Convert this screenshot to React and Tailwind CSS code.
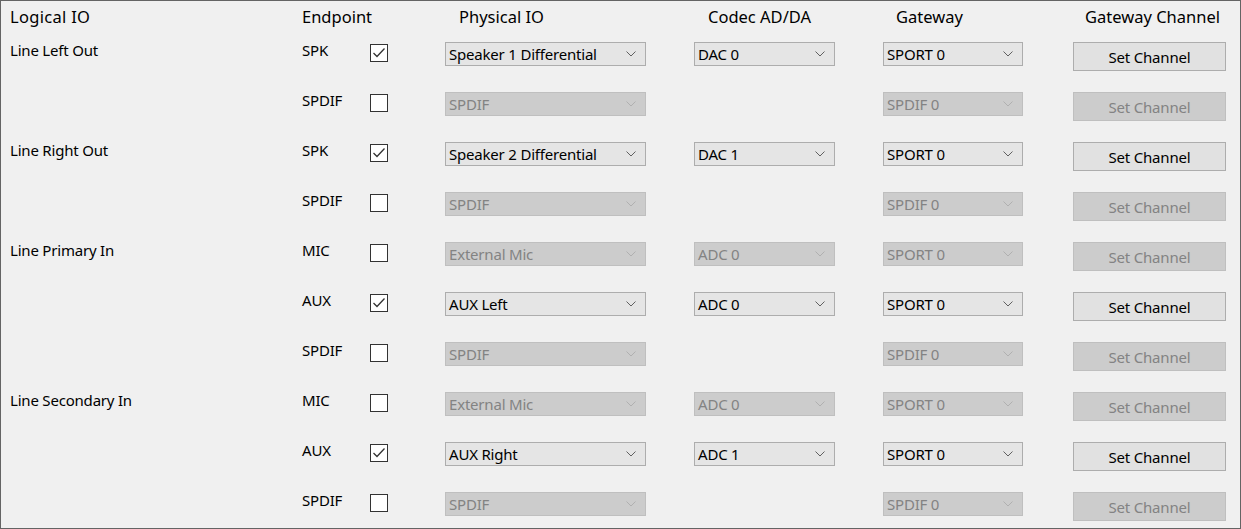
import React from 'react';

const rows = [
  { logical: 'Line Left Out', ep: 'SPK', checked: true, phys: 'Speaker 1 Differential', codec: 'DAC 0', gw: 'SPORT 0', enabled: true },
  { ep: 'SPDIF', checked: false, phys: 'SPDIF', codec: null, gw: 'SPDIF 0', enabled: false },
  { logical: 'Line Right Out', ep: 'SPK', checked: true, phys: 'Speaker 2 Differential', codec: 'DAC 1', gw: 'SPORT 0', enabled: true },
  { ep: 'SPDIF', checked: false, phys: 'SPDIF', codec: null, gw: 'SPDIF 0', enabled: false },
  { logical: 'Line Primary In', ep: 'MIC', checked: false, phys: 'External Mic', codec: 'ADC 0', gw: 'SPORT 0', enabled: false },
  { ep: 'AUX', checked: true, phys: 'AUX Left', codec: 'ADC 0', gw: 'SPORT 0', enabled: true },
  { ep: 'SPDIF', checked: false, phys: 'SPDIF', codec: null, gw: 'SPDIF 0', enabled: false },
  { logical: 'Line Secondary In', ep: 'MIC', checked: false, phys: 'External Mic', codec: 'ADC 0', gw: 'SPORT 0', enabled: false },
  { ep: 'AUX', checked: true, phys: 'AUX Right', codec: 'ADC 1', gw: 'SPORT 0', enabled: true },
  { ep: 'SPDIF', checked: false, phys: 'SPDIF', codec: null, gw: 'SPDIF 0', enabled: false },
];

const Chevron = ({ enabled }) => (
  <svg width="10" height="6" viewBox="0 0 10 6" className="mr-[9px] shrink-0">
    <path d="M0.5 0.5 L5 5 L9.5 0.5" fill="none" stroke={enabled ? '#606060' : '#b0b0b0'} strokeWidth="1" />
  </svg>
);

const Combo = ({ value, enabled, width }) => (
  <div
    className={`flex items-center justify-between h-[24px] border pl-[3px] ${width} ${
      enabled ? 'bg-[#e5e5e5] border-[#adadad] text-black' : 'bg-[#cccccc] border-[#bfbfbf] text-[#838383]'
    }`}
  >
    <span className="leading-5">{value}</span>
    <Chevron enabled={enabled} />
  </div>
);

const Check = ({ checked }) => (
  <div className="w-[18px] h-[18px] border border-[#333333] bg-white flex items-center justify-center">
    {checked && (
      <svg width="14" height="12" viewBox="0 0 14 12">
        <path d="M1.5 6 L5 9.5 L12.5 1.5" fill="none" stroke="#333333" strokeWidth="1.3" />
      </svg>
    )}
  </div>
);

export default function App() {
  return (
    <div
      className="w-[1241px] h-[529px] bg-[#f0f0f0] border border-[#646464] text-[15px] tracking-[-0.2px] text-black overflow-hidden"
      style={{ fontFamily: '"Noto Sans", "Open Sans", sans-serif' }}
    >
      {/* header row */}
      <div className="flex h-[28px] pt-[6px] leading-5 text-[16.5px] tracking-normal">
        <div className="w-[301px] pl-[9px] tracking-[0.3px]">Logical IO</div>
        <div className="w-[143px]">Endpoint</div>
        <div className="w-[249px] pl-[14px]">Physical IO</div>
        <div className="w-[189px] pl-[14px]">Codec AD/DA</div>
        <div className="w-[190px] pl-[13px]">Gateway</div>
        <div className="pl-[12px]">Gateway Channel</div>
      </div>
      {rows.map((r, i) => (
        <div key={i} className="flex h-[50px] pt-[13px]">
          <div className="w-[301px] pl-[9px] leading-5 -mt-[2px]">{r.logical || ''}</div>
          <div className="w-[68px] leading-5 -mt-[2px]">{r.ep}</div>
          <div className="w-[75px] pt-[2px]">
            <Check checked={r.checked} />
          </div>
          <div className="w-[249px]">
            <Combo value={r.phys} enabled={r.enabled} width="w-[201px]" />
          </div>
          <div className="w-[189px]">
            {r.codec && <Combo value={r.codec} enabled={r.enabled} width="w-[141px]" />}
          </div>
          <div className="w-[190px]">
            <Combo value={r.gw} enabled={r.enabled} width="w-[140px]" />
          </div>
          <div>
            <button
              className={`w-[153px] h-[29px] border leading-5 ${
                r.enabled ? 'bg-[#e1e1e1] border-[#adadad] text-black' : 'bg-[#cccccc] border-[#bfbfbf] text-[#838383]'
              }`}
            >
              Set Channel
            </button>
          </div>
        </div>
      ))}
    </div>
  );
}
